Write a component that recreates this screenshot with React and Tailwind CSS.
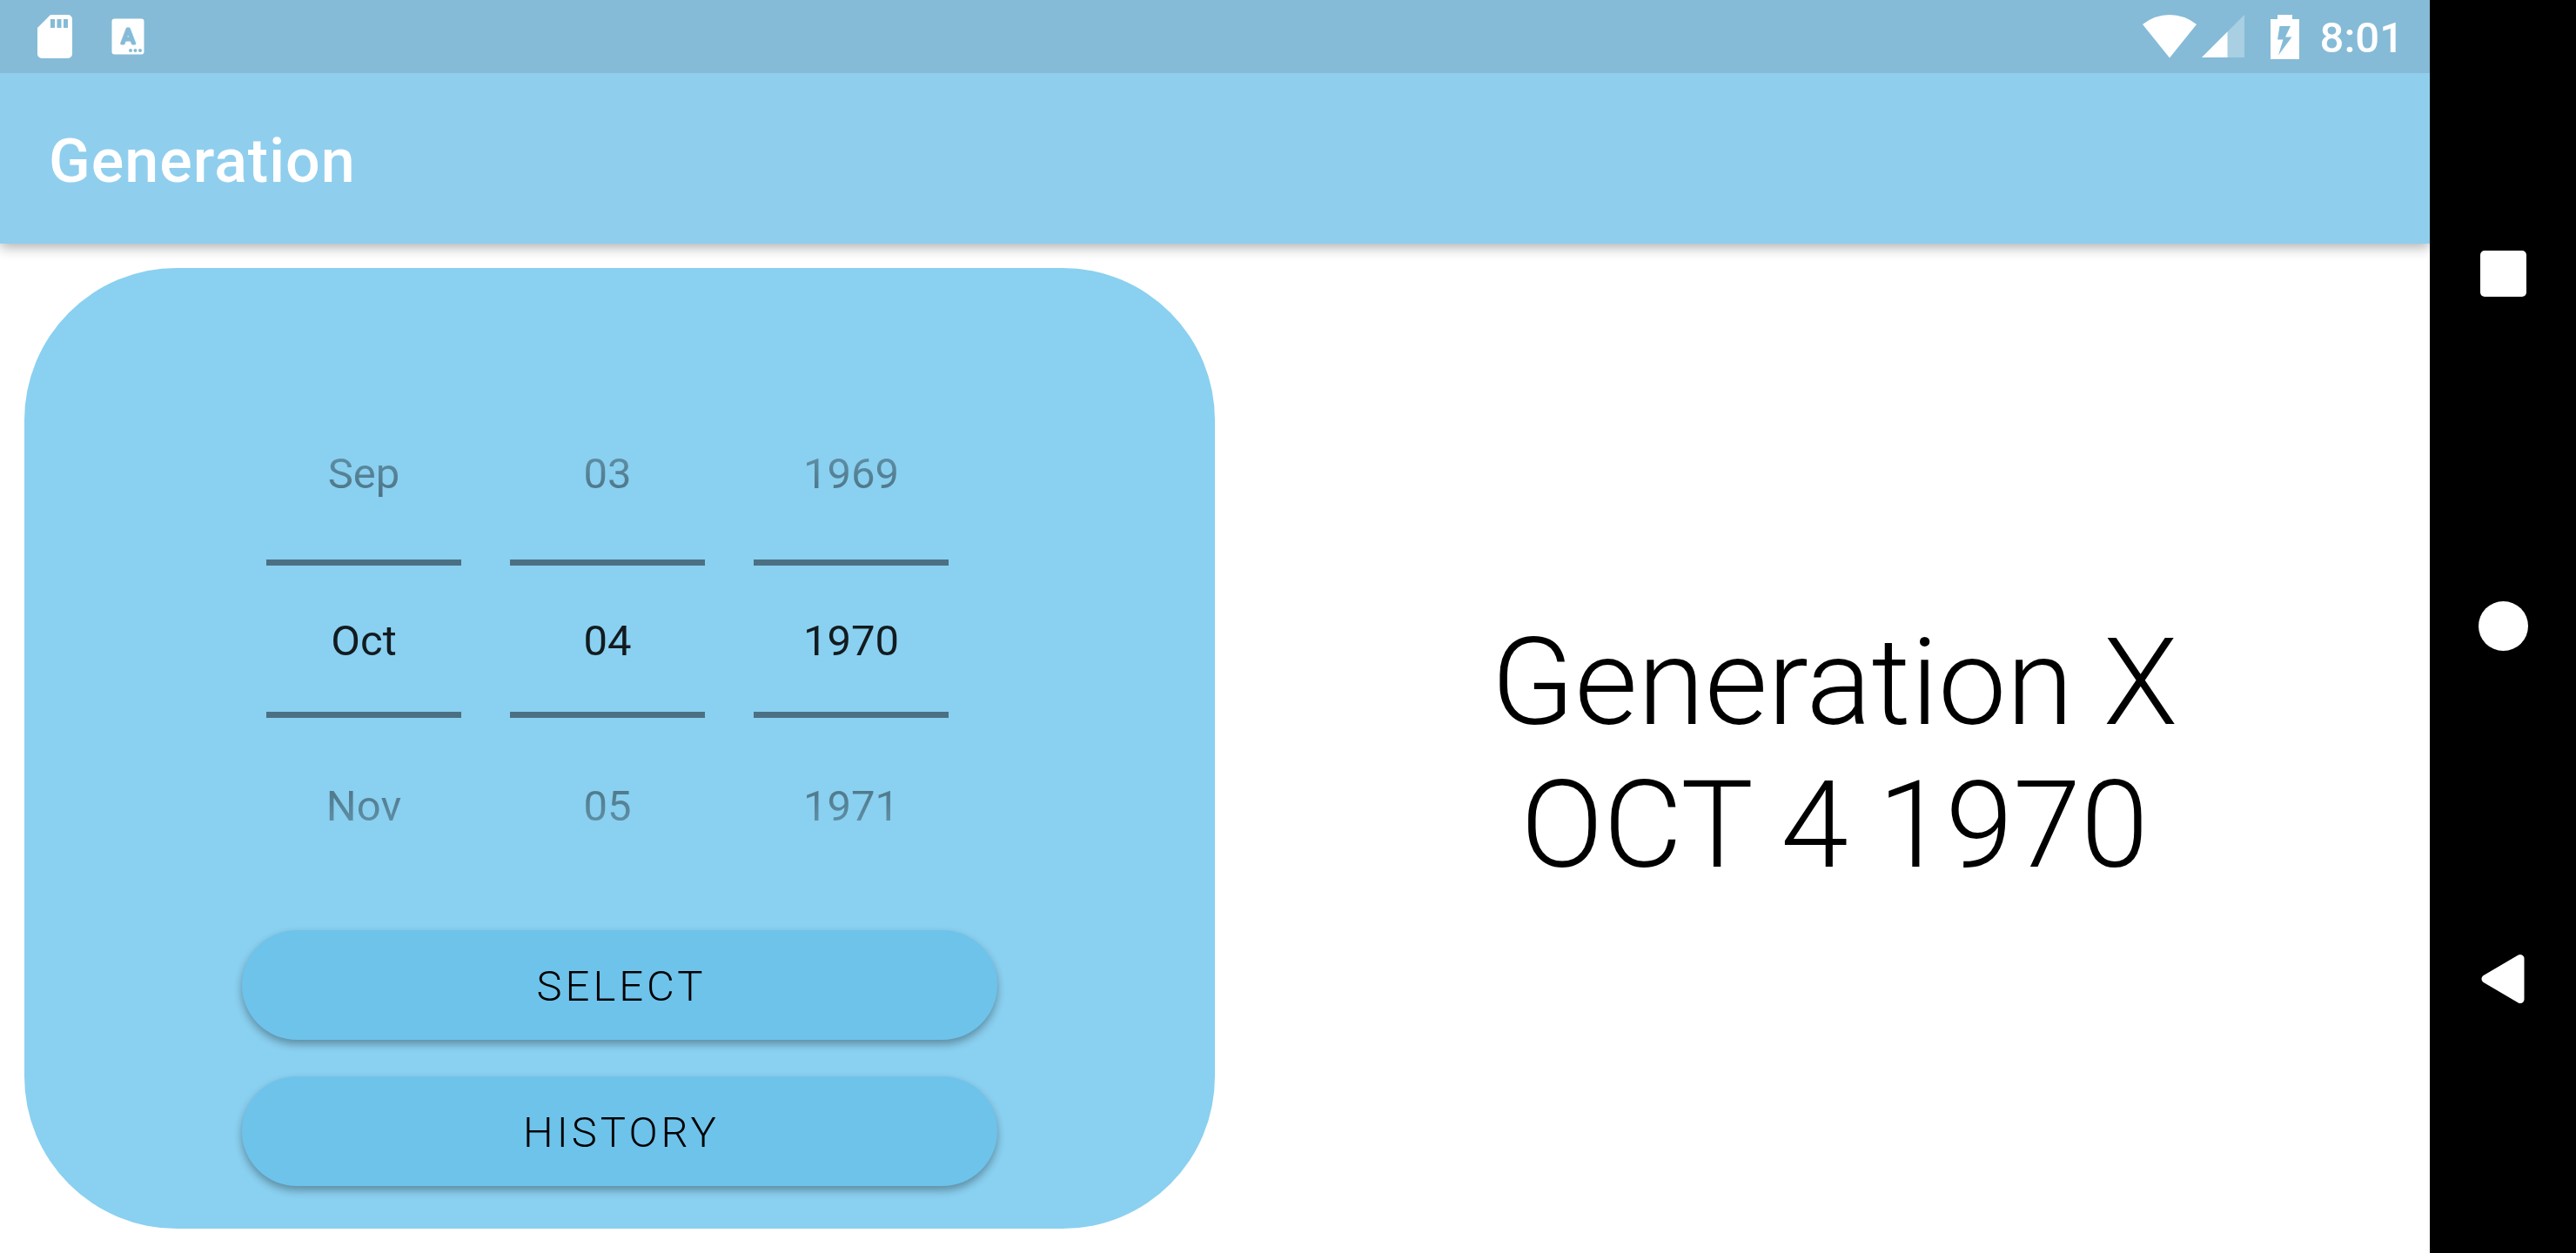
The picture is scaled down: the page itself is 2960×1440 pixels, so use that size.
import { useState } from "react";

const MONTHS = ["Jan", "Feb", "Mar", "Apr", "May", "Jun", "Jul", "Aug", "Sep", "Oct", "Nov", "Dec"];
const DAYS = Array.from({ length: 31 }, (_, i) => String(i + 1).padStart(2, "0"));
const YEARS = Array.from({ length: 120 }, (_, i) => String(1901 + i));

function generationOf(year) {
  if (year < 1928) return "Greatest Generation";
  if (year < 1946) return "Silent Generation";
  if (year < 1965) return "Baby Boomer";
  if (year < 1981) return "Generation X";
  if (year < 1997) return "Millennial";
  return "Generation Z";
}

function SdCardIcon() {
  return (
    <svg width="40" height="50" viewBox="0 0 40 50" fill="white" aria-hidden="true">
      <path
        fillRule="evenodd"
        d="M15 0H35a5 5 0 0 1 5 5V45a5 5 0 0 1-5 5H5a5 5 0 0 1-5-5V15ZM15 5V15h5V5ZM22.5 5V15h5V5ZM30 5V15h5V5Z"
      />
    </svg>
  );
}

function KeyboardIcon() {
  return (
    <svg width="38" height="42" viewBox="0 0 38 42" aria-hidden="true">
      <rect x="0.5" y="0.5" width="37" height="41" rx="3" fill="white" />
      <text
        x="19"
        y="29"
        textAnchor="middle"
        className="fill-[#85bbd7] stroke-[#85bbd7] font-['Roboto',sans-serif] text-[24px] font-normal"
        strokeWidth="3"
        strokeLinejoin="round"
      >
        A
      </text>
      <g fill="#85bbd7">
        <circle cx="22" cy="37" r="2" />
        <circle cx="27.500" cy="37" r="2" />
        <circle cx="33" cy="37" r="2" />
      </g>
    </svg>
  );
}

function WifiIcon() {
  return (
    <svg width="62" height="50" viewBox="0 0 62 50" fill="white" aria-hidden="true">
      <path d="M0 11Q14 0 31 0T62 11L31 49.500Z" />
    </svg>
  );
}

function SignalIcon() {
  return (
    <svg width="49" height="50" viewBox="0 0 49 50" fill="white" aria-hidden="true">
      <path d="M0 49L49 0V49Z" opacity="0.3" />
      <path d="M0 49L29.500 19.500V49Z" />
    </svg>
  );
}

function BatteryIcon() {
  return (
    <svg width="33" height="51" viewBox="0 0 33 51" fill="white" aria-hidden="true">
      <path
        fillRule="evenodd"
        d="M8 0H25V5H33V51H0V5H8ZM10.500 13L8 28.500H14.500L9 46.500L24.500 25.500H17L23 13Z"
      />
    </svg>
  );
}

function StatusBar() {
  return (
    <div className="flex h-[84px] items-center justify-between bg-[#85bbd7] pr-[30px] pl-[43px] text-white">
      <div className="flex items-center gap-[45px]">
        <SdCardIcon />
        <KeyboardIcon />
      </div>
      <div className="flex items-center">
        <WifiIcon />
        <span className="ml-1.5">
          <SignalIcon />
        </span>
        <span className="ml-[30px]">
          <BatteryIcon />
        </span>
        <time className="ml-6 pt-1 text-[49px] leading-[56px] font-medium">8:01</time>
      </div>
    </div>
  );
}

function NumberPicker({ label, values, index, onChange }) {
  const at = (i) => (i + values.length) % values.length;
  const previous = at(index - 1);
  const next = at(index + 1);
  return (
    <div className="flex w-56 flex-col text-[49px] leading-[58px]">
      <button
        type="button"
        onClick={() => onChange(previous)}
        className="flex h-56 items-center justify-center pt-7 text-black/87 [mask-image:linear-gradient(to_bottom,transparent,rgba(0,0,0,0.77))]"
      >
        {values[previous]}
      </button>
      <input
        aria-label={label}
        readOnly
        value={values[index]}
        className="h-[182px] w-full border-y-[7px] border-[#4c7083] bg-transparent pt-1 text-center text-black/87 outline-none"
      />
      <button
        type="button"
        onClick={() => onChange(next)}
        className="flex h-56 items-center justify-center pb-5 text-black/87 [mask-image:linear-gradient(to_top,transparent,rgba(0,0,0,0.77))]"
      >
        {values[next]}
      </button>
    </div>
  );
}

function PillButton({ children, onClick }) {
  return (
    <button
      type="button"
      onClick={onClick}
      className="h-[126px] w-full rounded-full bg-[#6ec3eb] pt-1 pl-1 text-[49px] leading-[58px] font-light tracking-[4px] text-black uppercase shadow-[0_5px_10px_rgba(0,0,0,0.32)]"
    >
      {children}
    </button>
  );
}

function NavigationBar() {
  const item = "flex flex-1 items-center justify-center";
  return (
    <nav aria-label="System" className="flex w-[168px] shrink-0 flex-col bg-black py-[112px]">
      <button type="button" aria-label="Recent apps" className={item}>
        <span className="size-[53px] rounded-[5px] bg-white" />
      </button>
      <button type="button" aria-label="Home" className={item}>
        <span className="size-[57px] rounded-full bg-white" />
      </button>
      <button type="button" aria-label="Back" className={item}>
        <svg width="50" height="58" viewBox="0 0 50 58" aria-hidden="true">
          <path
            d="M45 5.500V52.500L5 29Z"
            fill="white"
            stroke="white"
            strokeWidth="9"
            strokeLinejoin="round"
          />
        </svg>
      </button>
    </nav>
  );
}

export default function App() {
  const [month, setMonth] = useState(9);
  const [day, setDay] = useState(3);
  const [year, setYear] = useState(YEARS.indexOf("1970"));
  const [chosen, setChosen] = useState({ month: "OCT", day: 4, year: 1970 });

  const select = () =>
    setChosen({ month: MONTHS[month].toUpperCase(), day: day + 1, year: Number(YEARS[year]) });

  return (
    <div className="flex min-h-screen bg-white font-['Roboto',sans-serif]">
      <div className="flex min-w-0 flex-1 flex-col overflow-hidden">
        <header className="shadow-[0_4px_14px_rgba(0,0,0,0.32)]">
          <StatusBar />
          <div className="flex h-[196px] items-center bg-[#90ceee] px-14 pt-1.5">
            <h1 className="text-[70px] leading-[82px] font-medium tracking-[1px] text-white">
              Generation
            </h1>
          </div>
        </header>
        <main className="grid flex-1 grid-cols-2 gap-7 py-7 pl-7">
          <section className="flex flex-col items-center justify-end rounded-[175px] bg-[#8ad0f0] pb-[49px]">
            <div className="mr-7 flex gap-14">
              <NumberPicker label="Month" values={MONTHS} index={month} onChange={setMonth} />
              <NumberPicker label="Day" values={DAYS} index={day} onChange={setDay} />
              <NumberPicker label="Year" values={YEARS} index={year} onChange={setYear} />
            </div>
            <div className="mt-5 flex w-[868px] flex-col gap-[42px]">
              <PillButton onClick={select}>Select</PillButton>
              <PillButton>History</PillButton>
            </div>
          </section>
          <section className="flex flex-col items-center justify-center pt-3 text-center text-[140px] leading-[164px] font-light text-black">
            <p>{generationOf(chosen.year)}</p>
            <p>
              {chosen.month} {chosen.day} {chosen.year}
            </p>
          </section>
        </main>
      </div>
      <NavigationBar />
    </div>
  );
}
